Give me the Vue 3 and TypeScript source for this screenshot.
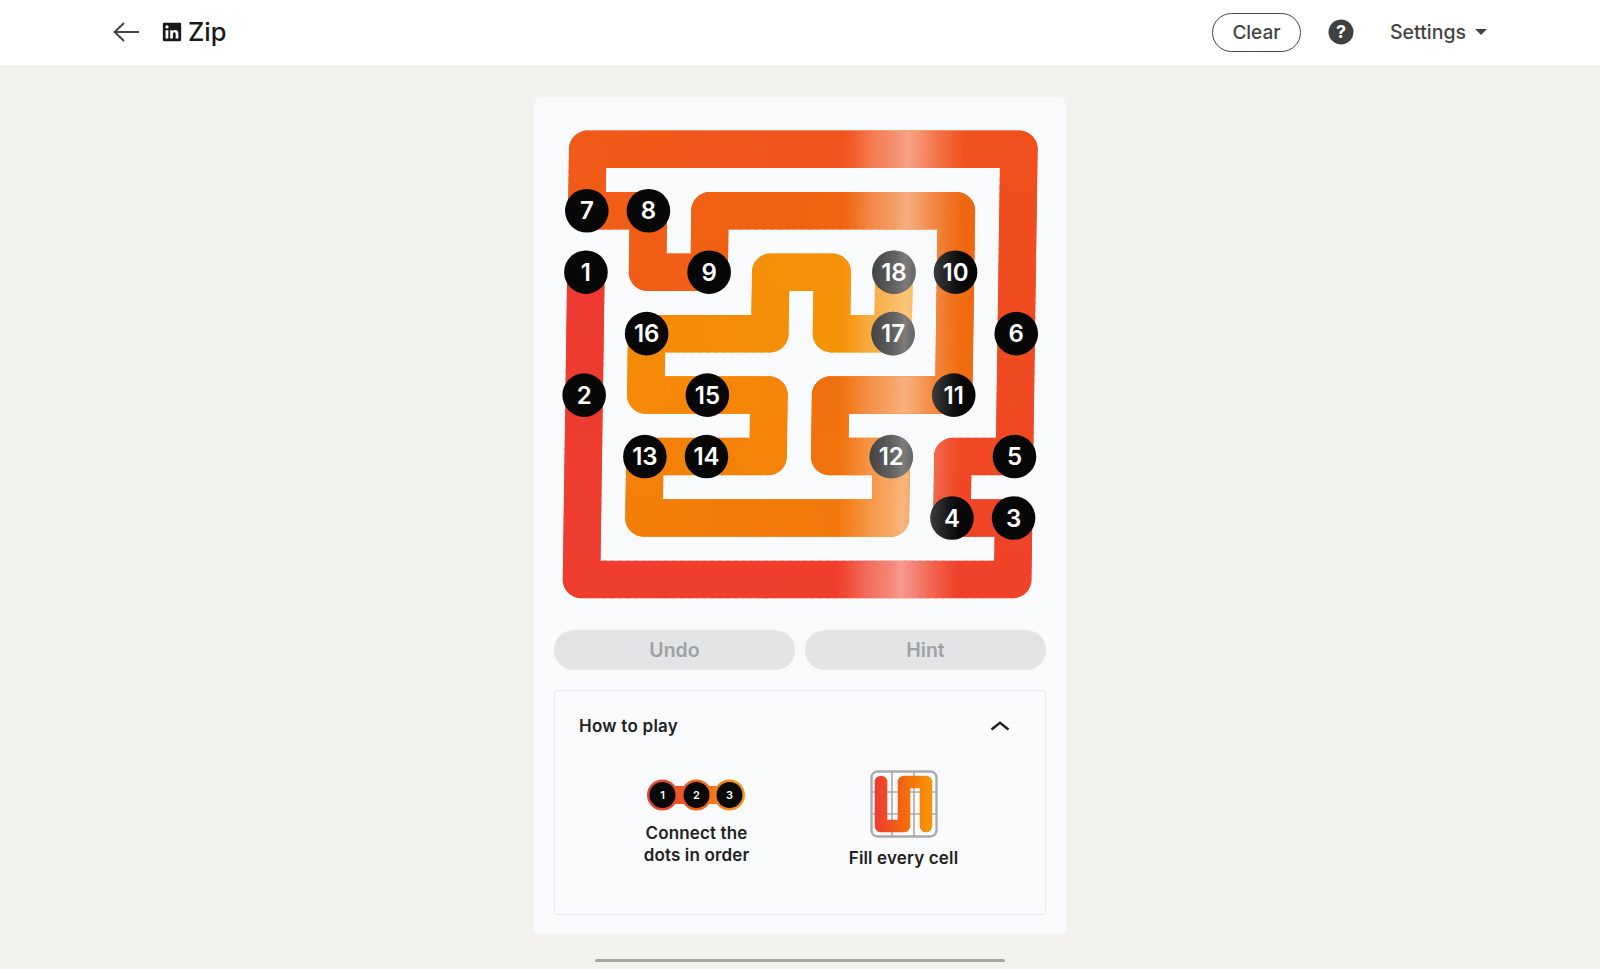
<template>
  <div class="zip-page">
    <!-- Top bar -->
    <header class="top-bar">
      <svg class="back-icon" width="26" height="20" viewBox="0 0 26 20" fill="none">
        <path d="M26 10H1.5M11 1 1.5 10l9.5 9" stroke="#444" stroke-width="2" />
      </svg>
      <svg class="logo-icon" width="22" height="22" viewBox="0 0 24 24">
        <path
          fill="#191919"
          d="M20.5 2h-17A1.5 1.5 0 002 3.5v17A1.5 1.5 0 003.5 22h17a1.5 1.5 0 001.5-1.5v-17A1.5 1.5 0 0020.5 2zM8 19H5v-9h3zM6.5 8.25A1.75 1.75 0 118.3 6.5a1.78 1.78 0 01-1.8 1.75zM19 19h-3v-4.74c0-1.42-.6-1.93-1.38-1.93A1.74 1.74 0 0013 14.19a.66.66 0 000 .14V19h-3v-9h2.9v1.3a3.11 3.11 0 012.7-1.4c1.55 0 3.36.86 3.36 3.66z"
        />
      </svg>
      <h1 class="game-title">Zip</h1>

      <div class="top-actions">
        <button class="clear-btn">Clear</button>
        <svg class="help-icon" width="26" height="26" viewBox="0 0 26 26">
          <circle cx="13" cy="13" r="12.5" fill="#404040" />
          <text x="13" y="19.2" text-anchor="middle" class="help-mark">?</text>
        </svg>
        <span class="settings-label">Settings</span>
        <span class="settings-caret"></span>
      </div>
    </header>

    <main class="page-main">
      <section class="game-card">
        <!-- Board -->
        <svg class="board" width="532" height="533" viewBox="534 97 532 533">
          <defs>
            <linearGradient
              id="shine"
              gradientUnits="userSpaceOnUse"
              x1="845"
              y1="0"
              x2="967"
              y2="0"
              gradientTransform="skewX(-0.825)"
            >
              <stop offset="0" stop-color="#fff" stop-opacity="0" />
              <stop offset="0.1" stop-color="#fff" stop-opacity="0.08" />
              <stop offset="0.25" stop-color="#fff" stop-opacity="0.24" />
              <stop offset="0.43" stop-color="#fff" stop-opacity="0.36" />
              <stop offset="0.53" stop-color="#fff" stop-opacity="0.47" />
              <stop offset="0.63" stop-color="#fff" stop-opacity="0.36" />
              <stop offset="0.75" stop-color="#fff" stop-opacity="0.22" />
              <stop offset="0.92" stop-color="#fff" stop-opacity="0.06" />
              <stop offset="1" stop-color="#fff" stop-opacity="0" />
            </linearGradient>
          </defs>

          <line
            v-for="(seg, i) in segments"
            :key="i"
            :x1="seg.x1"
            :y1="seg.y1"
            :x2="seg.x2"
            :y2="seg.y2"
            :stroke="seg.color"
            stroke-width="37.5"
            stroke-linecap="round"
          />
          <polyline
            :points="trailPoints"
            fill="none"
            stroke="url(#shine)"
            stroke-width="37.5"
            stroke-linejoin="round"
          />

          <g v-for="dot in dots" :key="dot.label">
            <circle :cx="dot.x" :cy="dot.y" r="21.8" fill="#070707" />
            <circle :cx="dot.x" :cy="dot.y" r="21.8" fill="url(#shine)" />
            <text :x="dot.x" :y="dot.y + 8.6" text-anchor="middle" class="dot-label">{{ dot.label }}</text>
          </g>
        </svg>

        <div class="board-actions">
          <button class="pill-btn">Undo</button>
          <button class="pill-btn">Hint</button>
        </div>

        <!-- How to play -->
        <div class="how-box">
          <div class="how-head">
            <span class="how-title">How to play</span>
            <svg width="20" height="12" viewBox="0 0 20 12" fill="none">
              <path d="M1.5 9.5 10 2.8l8.5 6.7" stroke="#222" stroke-width="2.6" />
            </svg>
          </div>
          <div class="how-grid">
            <div class="how-item">
              <svg class="how-dots" width="100" height="50" viewBox="646.5 770 100 50">
                <defs>
                  <linearGradient id="dotsLine" gradientUnits="userSpaceOnUse" x1="646" y1="0" x2="746" y2="0">
                    <stop offset="0" stop-color="#e0403c" />
                    <stop offset="0.5" stop-color="#f0621c" />
                    <stop offset="1" stop-color="#f5a010" />
                  </linearGradient>
                </defs>
                <rect x="662" y="786" width="67" height="18" fill="url(#dotsLine)" />
                <g v-for="d in miniDots" :key="d.n">
                  <circle :cx="d.x" cy="795" r="15.5" fill="url(#dotsLine)" />
                  <circle :cx="d.x" cy="795" r="13" fill="#0a0a0a" />
                  <text :x="d.x" y="799" text-anchor="middle" class="mini-label">{{ d.n }}</text>
                </g>
              </svg>
              <p class="how-text">Connect the<br />dots in order</p>
            </div>
            <div class="how-item">
              <svg class="how-cells" width="68" height="68" viewBox="870 770 68 68" fill="none">
                <defs>
                  <linearGradient id="cellsLine" gradientUnits="userSpaceOnUse" x1="875" y1="0" x2="933" y2="0">
                    <stop offset="0" stop-color="#ee3b30" />
                    <stop offset="0.5" stop-color="#f2680f" />
                    <stop offset="1" stop-color="#f6980a" />
                  </linearGradient>
                </defs>
                <rect x="871.5" y="771.5" width="65" height="65" rx="6" stroke="#ababab" stroke-width="2.4" />
                <path d="M892 771v66M914 771v66M871 792h66M871 814h66" stroke="#ababab" stroke-width="1.6" />
                <path
                  d="M881 782v44h23v-44h22v44"
                  stroke="url(#cellsLine)"
                  stroke-width="12.6"
                  stroke-linecap="round"
                  stroke-linejoin="round"
                />
              </svg>
              <p class="how-text cells-text">Fill every cell</p>
            </div>
          </div>
        </div>
      </section>

      <div class="scroll-bar"></div>
    </main>
  </div>
</template>

<script setup lang="ts">
import { computed } from 'vue'

type Cell = [number, number]

// the board is very slightly skewed in the reference
const toPoint = (col: number, row: number) => {
  const y = 149.3 + 61.45 * row
  const x = 587.7 + 61.6 * col - 0.0144 * (y - 149.3)
  return { x: +x.toFixed(2), y: +y.toFixed(2) }
}

const corners: Cell[] = [
  [0, 2], [0, 7], [7, 7], [7, 6], [6, 6], [6, 5], [7, 5], [7, 0], [0, 0], [0, 1],
  [1, 1], [1, 2], [2, 2], [2, 1], [6, 1], [6, 4], [4, 4], [4, 5], [5, 5], [5, 6],
  [1, 6], [1, 5], [3, 5], [3, 4], [1, 4], [1, 3], [3, 3], [3, 2], [4, 2], [4, 3],
  [5, 3], [5, 2],
]

const numbered: Cell[] = [
  [0, 2], [0, 4], [7, 6], [6, 6], [7, 5], [7, 3], [0, 1], [1, 1], [2, 2],
  [6, 2], [6, 4], [5, 5], [1, 5], [2, 5], [2, 4], [1, 3], [5, 3], [5, 2],
]

const colorStops: [number, number[]][] = [
  [0, [238, 58, 48]],
  [0.15, [239, 63, 43]],
  [0.3, [240, 76, 32]],
  [0.45, [241, 90, 24]],
  [0.6, [239, 104, 16]],
  [0.75, [244, 122, 11]],
  [0.9, [245, 140, 7]],
  [1, [245, 149, 6]],
]

const colorAt = (t: number) => {
  let i = 0
  while (i < colorStops.length - 2 && t > colorStops[i + 1][0]) i++
  const [t0, c0] = colorStops[i]
  const [t1, c1] = colorStops[i + 1]
  const k = (t - t0) / (t1 - t0)
  const mix = c0.map((v, n) => Math.round(v + (c1[n] - v) * k))
  return `rgb(${mix.join(',')})`
}

const cells = computed(() => {
  const list: Cell[] = [corners[0]]
  for (let i = 1; i < corners.length; i++) {
    let [c, r] = corners[i - 1]
    const [tc, tr] = corners[i]
    while (c !== tc || r !== tr) {
      c += Math.sign(tc - c)
      r += Math.sign(tr - r)
      list.push([c, r])
    }
  }
  return list
})

// each cell step is cut into pieces so the colour change stays smooth
const PIECES = 8

const segments = computed(() => {
  const list = cells.value
  const out = []
  for (let i = 1; i < list.length; i++) {
    const a = toPoint(list[i - 1][0], list[i - 1][1])
    const b = toPoint(list[i][0], list[i][1])
    for (let p = 0; p < PIECES; p++) {
      out.push({
        x1: a.x + ((b.x - a.x) * p) / PIECES,
        y1: a.y + ((b.y - a.y) * p) / PIECES,
        x2: a.x + ((b.x - a.x) * (p + 1)) / PIECES,
        y2: a.y + ((b.y - a.y) * (p + 1)) / PIECES,
        color: colorAt((i - 1 + p / PIECES) / (list.length - 1)),
      })
    }
  }
  return out
})

const trailPoints = computed(() =>
  corners
    .map(([c, r]) => {
      const p = toPoint(c, r)
      return `${p.x},${p.y}`
    })
    .join(' '),
)

const dots = numbered.map(([c, r], i) => ({ ...toPoint(c, r), label: i + 1 }))

const miniDots = [
  { n: 1, x: 662 },
  { n: 2, x: 696 },
  { n: 3, x: 729 },
]
</script>

<style>
body {
  margin: 0;
  background: #f3f2ee;
  overflow: hidden;
}
</style>

<style scoped>
.zip-page {
  height: 969px;
  overflow: hidden;
  font-family: Inter, 'Noto Sans', sans-serif;
  color: #1c1c1c;
}

.top-bar {
  height: 67px;
  box-sizing: border-box;
  background: #fff;
  border-bottom: 1px solid #e9e8e5;
  display: flex;
  align-items: center;
  padding: 0 113px 2px;
}

.back-icon {
  margin-right: 22px;
}

.logo-icon {
  margin-right: 5px;
}

.game-title {
  margin: 0;
  font-size: 25.5px;
  font-weight: 500;
  line-height: 30px;
  color: #191919;
}

.top-actions {
  margin-left: auto;
  display: flex;
  align-items: center;
}

.clear-btn {
  width: 89px;
  height: 39px;
  box-sizing: border-box;
  background: #fff;
  border: 1px solid #444;
  border-radius: 20px;
  padding: 0;
  font: 500 19px Inter, sans-serif;
  color: #444;
  margin-right: 27px;
}

.help-icon {
  margin-right: 36px;
}

.help-mark {
  font: 700 18px Inter, sans-serif;
  fill: #fff;
}

.settings-label {
  font-size: 19.5px;
  font-weight: 500;
  color: #444;
  margin-right: 9px;
}

.settings-caret {
  width: 0;
  height: 0;
  border-left: 6px solid transparent;
  border-right: 6px solid transparent;
  border-top: 6px solid #444;
}

.page-main {
  display: flex;
  flex-direction: column;
  align-items: center;
}

.game-card {
  width: 532px;
  height: 837px;
  box-sizing: border-box;
  margin-top: 30px;
  background: #f9fafc;
  border-radius: 8px 8px 2px 2px;
}

.board {
  display: block;
}

.dot-label {
  font: 600 24px Inter, sans-serif;
  fill: #fff;
}

.mini-label {
  font: 600 11px Inter, sans-serif;
  fill: #fff;
}

.board-actions {
  display: grid;
  grid-template-columns: 1fr 1fr;
  gap: 10px;
  padding: 0 20px;
}

.pill-btn {
  height: 40px;
  border: none;
  border-radius: 20px;
  background: #e3e4e6;
  color: #a0a1a4;
  font: 600 19.5px Inter, sans-serif;
  padding: 0;
}

.how-box {
  margin: 20px 20px 0;
  height: 225px;
  box-sizing: border-box;
  border: 1px solid #e6e8eb;
  border-radius: 4px;
}

.how-head {
  display: flex;
  align-items: center;
  justify-content: space-between;
  padding: 24px 35px 0 24px;
  height: 22px;
}

.how-title {
  font-size: 17px;
  font-weight: 600;
  letter-spacing: 0.25px;
  line-height: 22px;
  color: #222;
}

.how-grid {
  display: grid;
  grid-template-columns: 207px 207px;
  justify-content: center;
  margin-top: 33px;
}

.how-item {
  display: flex;
  flex-direction: column;
  align-items: center;
}

.how-text {
  margin: 2px 0 0;
  font-size: 17px;
  font-weight: 600;
  letter-spacing: 0.15px;
  line-height: 22px;
  text-align: center;
  color: #222;
}

.cells-text {
  margin-top: 9px;
}

.scroll-bar {
  width: 410px;
  height: 3px;
  margin-top: 25px;
  border-radius: 2px;
  background: #a6a6a1;
}
</style>
